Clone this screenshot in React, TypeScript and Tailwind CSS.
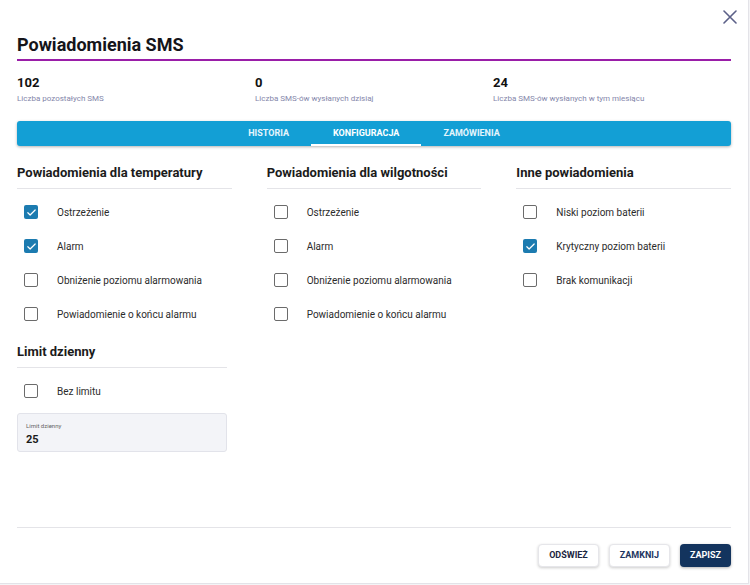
import React, { useState } from "react";

type Item = { label: string; checked: boolean };

const Checkbox: React.FC<{ checked: boolean; onClick: () => void }> = ({ checked, onClick }) => (
    <button
        onClick={onClick}
        className={
            checked
                ? "w-[14px] h-[14px] rounded-[2px] bg-[#1c7bb0] flex items-center justify-center"
                : "w-[14px] h-[14px] rounded-[2px] border-[1.5px] border-[#6b6b6b] bg-white"
        }
    >
        {checked && (
            <svg width="11" height="11" viewBox="0 0 24 24" fill="none">
                <path d="M4 12.5l5 5L20 6.5" stroke="white" strokeWidth="2.6" strokeLinecap="round" strokeLinejoin="round" />
            </svg>
        )}
    </button>
);

const Row: React.FC<{ item: Item; onToggle: () => void }> = ({ item, onToggle }) => (
    <div className="flex items-center h-[34px] pl-[7px]">
        <Checkbox checked={item.checked} onClick={onToggle} />
        <span className="ml-[19px] text-[10px] text-[#2b2b2b]">{item.label}</span>
    </div>
);

const Section: React.FC<{ title: string; items: Item[]; setItems: (i: Item[]) => void }> = ({ title, items, setItems }) => (
    <div>
        <h3 className="text-[13px] font-bold text-[#1b1b1b] leading-[16px] pb-[7px] border-b border-[#e4e4e8]">
            {title}
        </h3>
        <div className="pt-[6px]">
            {items.map((it, idx) => (
                <Row
                    key={it.label}
                    item={it}
                    onToggle={() => setItems(items.map((x, j) => (j === idx ? { ...x, checked: !x.checked } : x)))}
                />
            ))}
        </div>
    </div>
);

export default function App() {
    const [tab, setTab] = useState("KONFIGURACJA");
    const [temp, setTemp] = useState<Item[]>([
        { label: "Ostrzeżenie", checked: true },
        { label: "Alarm", checked: true },
        { label: "Obniżenie poziomu alarmowania", checked: false },
        { label: "Powiadomienie o końcu alarmu", checked: false },
    ]);
    const [hum, setHum] = useState<Item[]>([
        { label: "Ostrzeżenie", checked: false },
        { label: "Alarm", checked: false },
        { label: "Obniżenie poziomu alarmowania", checked: false },
        { label: "Powiadomienie o końcu alarmu", checked: false },
    ]);
    const [other, setOther] = useState<Item[]>([
        { label: "Niski poziom baterii", checked: false },
        { label: "Krytyczny poziom baterii", checked: true },
        { label: "Brak komunikacji", checked: false },
    ]);
    const [noLimit, setNoLimit] = useState<Item[]>([{ label: "Bez limitu", checked: false }]);

    const stats = [
        { value: "102", label: "Liczba pozostałych SMS" },
        { value: "0", label: "Liczba SMS-ów wysłanych dzisiaj" },
        { value: "24", label: "Liczba SMS-ów wysłanych w tym miesiącu" },
    ];

    return (
        <div className="w-[750px] h-[585px] bg-[#f4f4f6] font-['Roboto',sans-serif]">
            <div className="relative w-[749px] h-[584px] bg-white border-r border-b border-[#e3e3e8] flex flex-col px-[17px]">
                {/* close */}
                <button className="absolute top-[9px] right-[11px] w-[15px] h-[15px] flex items-center justify-center">
                    <svg width="14" height="14" viewBox="0 0 14 14">
                        <path d="M1 1L13 13M13 1L1 13" stroke="#5c6088" strokeWidth="1.6" strokeLinecap="round" />
                    </svg>
                </button>

                <h1 className="mt-[33px] text-[18px] leading-[24px] font-bold text-[#15151a] pb-[2px] border-b-2 border-[#9a1ea8]">
                    Powiadomienia SMS
                </h1>

                <div className="grid grid-cols-3 mt-[14px]">
                    {stats.map((s) => (
                        <div key={s.label}>
                            <div className="text-[13px] leading-[16px] font-bold text-[#111]">{s.value}</div>
                            <div className="text-[8px] leading-[10px] mt-[3px] text-[#8486aa]">{s.label}</div>
                        </div>
                    ))}
                </div>

                <div className="mt-[17px] h-[25px] rounded-[3px] bg-[#139fd5] shadow-[0_1px_3px_rgba(0,0,0,0.3)] flex justify-center">
                    {["HISTORIA", "KONFIGURACJA", "ZAMÓWIENIA"].map((t) => (
                        <button
                            key={t}
                            onClick={() => setTab(t)}
                            className={
                                tab === t
                                    ? "px-[22px] h-full text-[9px] font-bold text-white border-b-2 border-white pt-[2px]"
                                    : "px-[22px] h-full text-[9px] font-bold text-[#e6f5fc] border-b-2 border-transparent pt-[2px]"
                            }
                        >
                            {t}
                        </button>
                    ))}
                </div>

                <div className="flex-1 grid grid-cols-3 gap-x-[35px] mt-[19px] content-start">
                    <div>
                        <Section title="Powiadomienia dla temperatury" items={temp} setItems={setTemp} />
                        <div className="mt-[13px] w-[210px]">
                            <Section title="Limit dzienny" items={noLimit} setItems={setNoLimit} />
                            <div className="mt-[5px] h-[39px] rounded-[3px] bg-[#f3f4f8] border border-[#e2e3ea] px-[8px] pt-[8px]">
                                <div className="text-[6px] leading-[8px] text-[#666]">Limit dzienny</div>
                                <div className="text-[11px] leading-[14px] font-bold text-[#1a1a1a] mt-[3px]">25</div>
                            </div>
                        </div>
                    </div>
                    <Section title="Powiadomienia dla wilgotności" items={hum} setItems={setHum} />
                    <Section title="Inne powiadomienia" items={other} setItems={setOther} />
                </div>

                <div className="border-t border-[#e4e4e8] pt-[16px] pb-[16px] flex justify-end gap-[10px]">
                    <button className="h-[23px] px-[10px] rounded-[4px] bg-white border border-[#e6e6ea] shadow-[0_1px_3px_rgba(0,0,0,0.2)] text-[9px] font-bold text-[#1b2540]">
                        ODŚWIEŻ
                    </button>
                    <button className="h-[23px] px-[10px] rounded-[4px] bg-white border border-[#e6e6ea] shadow-[0_1px_3px_rgba(0,0,0,0.2)] text-[9px] font-bold text-[#1d3560]">
                        ZAMKNIJ
                    </button>
                    <button className="h-[23px] px-[10px] rounded-[4px] bg-[#13345e] shadow-[0_1px_3px_rgba(0,0,0,0.3)] text-[9px] font-bold text-white">
                        ZAPISZ
                    </button>
                </div>
            </div>
        </div>
    );
}
